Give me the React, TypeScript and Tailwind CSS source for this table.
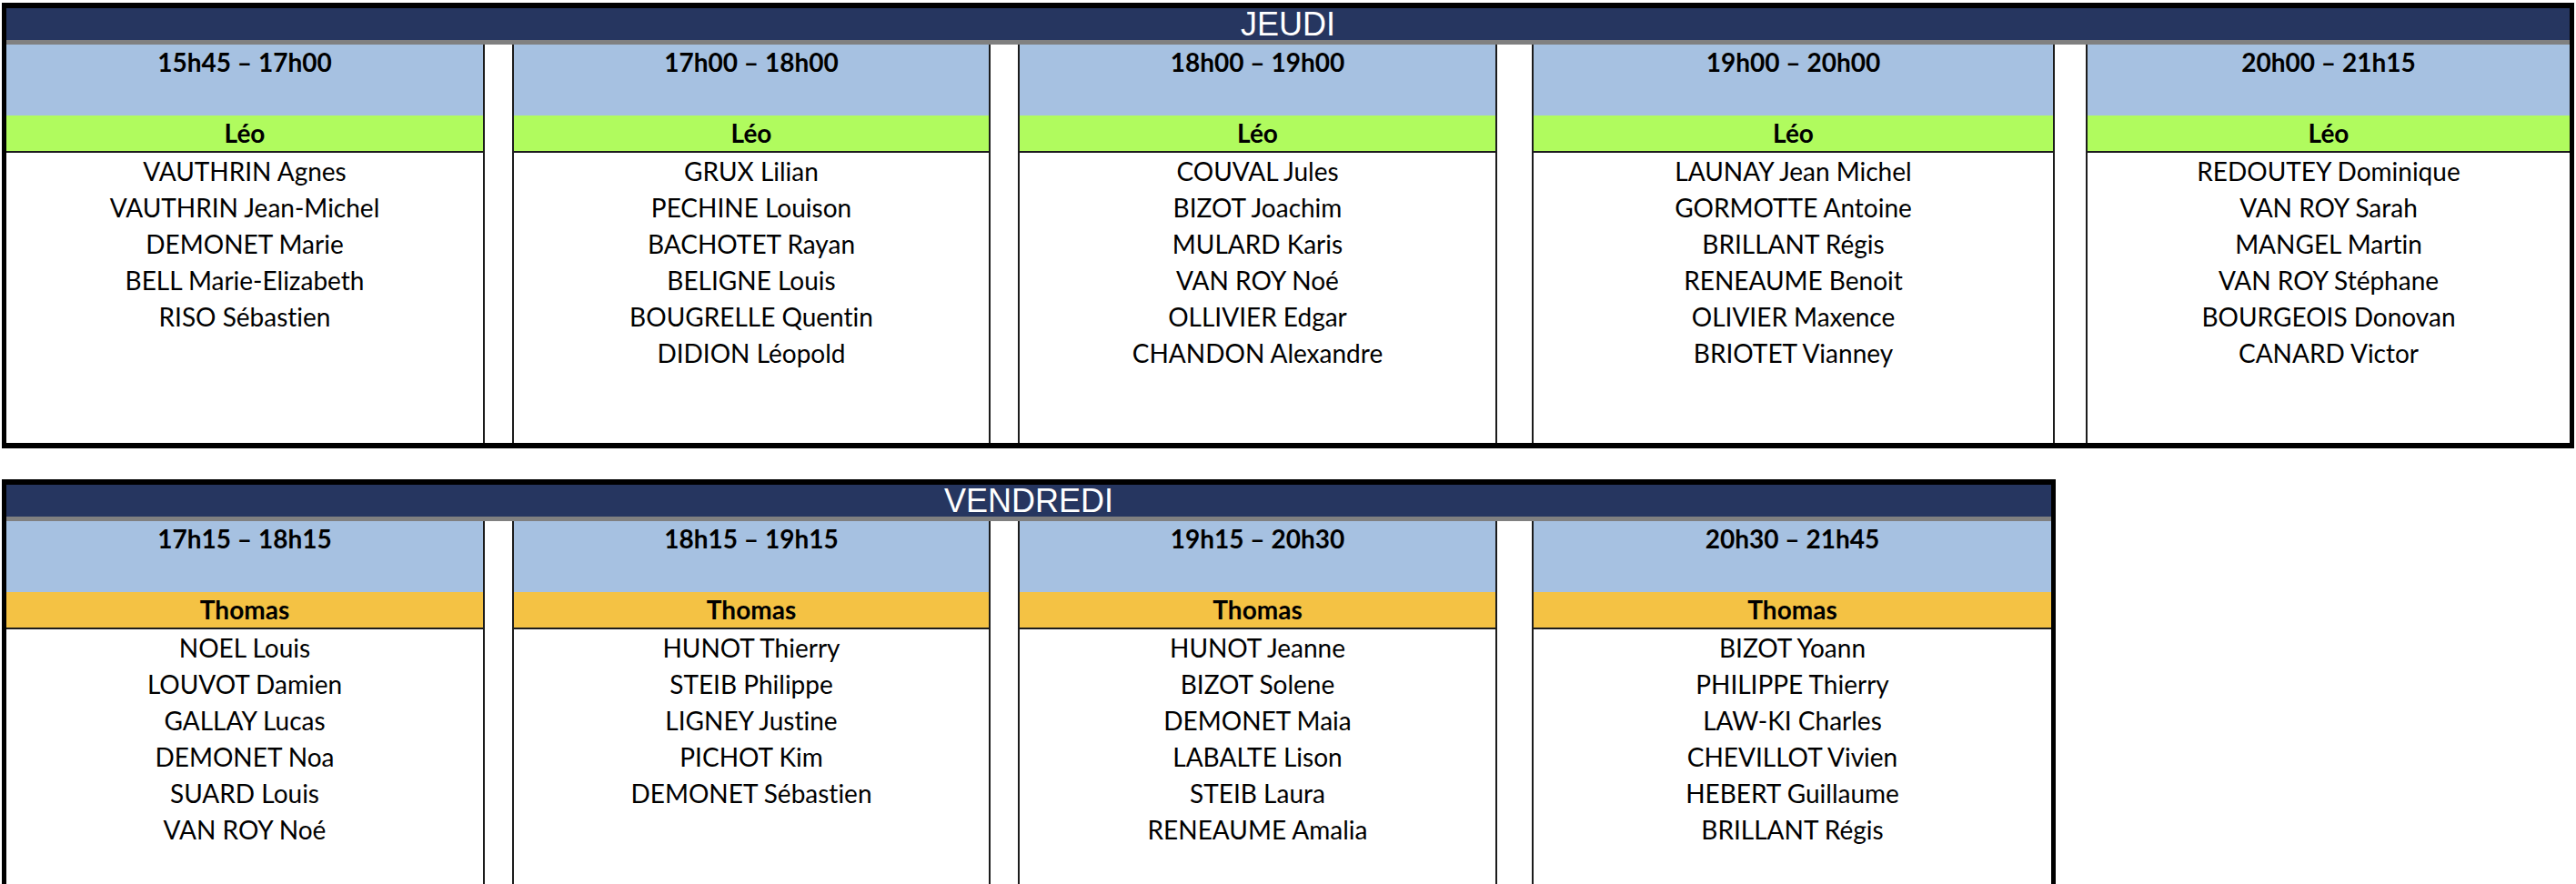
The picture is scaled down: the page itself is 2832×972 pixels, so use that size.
import React from "react"

interface Slot {
  time: string
  coach: string
  names: string[]
  width: string
}

const jeudi: Slot[] = [
  {
    time: "15h45 – 17h00",
    coach: "Léo",
    width: "w-[524px]",
    names: ["VAUTHRIN Agnes", "VAUTHRIN Jean-Michel", "DEMONET Marie", "BELL Marie-Elizabeth", "RISO Sébastien"],
  },
  {
    time: "17h00 – 18h00",
    coach: "Léo",
    width: "w-[522px]",
    names: ["GRUX Lilian", "PECHINE Louison", "BACHOTET Rayan", "BELIGNE Louis", "BOUGRELLE Quentin", "DIDION Léopold"],
  },
  {
    time: "18h00 – 19h00",
    coach: "Léo",
    width: "w-[523px]",
    names: ["COUVAL Jules", "BIZOT Joachim", "MULARD Karis", "VAN ROY Noé", "OLLIVIER Edgar", "CHANDON Alexandre"],
  },
  {
    time: "19h00 – 20h00",
    coach: "Léo",
    width: "w-[571px]",
    names: ["LAUNAY Jean Michel", "GORMOTTE Antoine", "BRILLANT Régis", "RENEAUME Benoit", "OLIVIER Maxence", "BRIOTET Vianney"],
  },
  {
    time: "20h00 – 21h15",
    coach: "Léo",
    width: "w-[530px]",
    names: ["REDOUTEY Dominique", "VAN ROY Sarah", "MANGEL Martin", "VAN ROY Stéphane", "BOURGEOIS Donovan", "CANARD Victor"],
  },
]

const vendredi: Slot[] = [
  {
    time: "17h15 – 18h15",
    coach: "Thomas",
    width: "w-[524px]",
    names: ["NOEL Louis", "LOUVOT Damien", "GALLAY Lucas", "DEMONET Noa", "SUARD Louis", "VAN ROY Noé"],
  },
  {
    time: "18h15 – 19h15",
    coach: "Thomas",
    width: "w-[522px]",
    names: ["HUNOT Thierry", "STEIB Philippe", "LIGNEY Justine", "PICHOT Kim", "DEMONET Sébastien"],
  },
  {
    time: "19h15 – 20h30",
    coach: "Thomas",
    width: "w-[523px]",
    names: ["HUNOT Jeanne", "BIZOT Solene", "DEMONET Maia", "LABALTE Lison", "STEIB Laura", "RENEAUME Amalia"],
  },
  {
    time: "20h30 – 21h45",
    coach: "Thomas",
    width: "w-[569px]",
    names: ["BIZOT Yoann", "PHILIPPE Thierry", "LAW-KI Charles", "CHEVILLOT Vivien", "HEBERT Guillaume", "BRILLANT Régis"],
  },
]

const spacers = ["w-[34px]", "w-[34px]", "w-[42px]", "w-[38px]"]

function Column({ slot, coachBg }: { slot: Slot; coachBg: string }) {
  return (
    <div className={`${slot.width} flex flex-col shrink-0`}>
      <div className="h-[78px] bg-[#a6c1e1] pt-[2px] text-center text-[28px] leading-[34px] font-bold">
        {slot.time}
      </div>
      <div
        className={`h-[41px] ${coachBg} border-b-2 border-[#1c1c1c] text-center text-[28px] leading-[39px] font-bold`}
      >
        {slot.coach}
      </div>
      <div className="flex-1 bg-white text-center text-[28px] leading-[40px]">
        {slot.names.map((n) => (
          <div key={n}>{n}</div>
        ))}
      </div>
    </div>
  )
}

function DayTable({
  title,
  slots,
  coachBg,
  width,
}: {
  title: string
  slots: Slot[]
  coachBg: string
  width: string
}) {
  return (
    <div className={`${width} ml-[2px] border-x-[5px] border-y-[6px] border-black bg-white`}>
      {/* day banner */}
      <div
        className="h-[40px] bg-[#263660] border-b-[5px] border-[#808080] text-center text-white text-[36px] leading-[35px]"
        style={{ fontFamily: '"Liberation Sans", Arial, sans-serif' }}
      >
        {title}
      </div>
      <div className="flex h-[438px]">
        {slots.map((slot, i) => (
          <React.Fragment key={slot.time}>
            <Column slot={slot} coachBg={coachBg} />
            {i < slots.length - 1 && (
              <div className={`${spacers[i]} shrink-0 bg-white border-x-2 border-[#1c1c1c]`} />
            )}
          </React.Fragment>
        ))}
      </div>
    </div>
  )
}

export default function App() {
  return (
    <div
      className="bg-white text-black pt-[3px] w-[2832px] h-[972px] overflow-hidden [font-variant-ligatures:none]"
      style={{ fontFamily: 'Lato, "Open Sans", sans-serif' }}
    >
      <DayTable title="JEUDI" slots={jeudi} coachBg="bg-[#b0fb5e]" width="w-[2828px]" />
      <div className="h-[34px]" />
      <DayTable title="VENDREDI" slots={vendredi} coachBg="bg-[#f4c244]" width="w-[2258px]" />
    </div>
  )
}
